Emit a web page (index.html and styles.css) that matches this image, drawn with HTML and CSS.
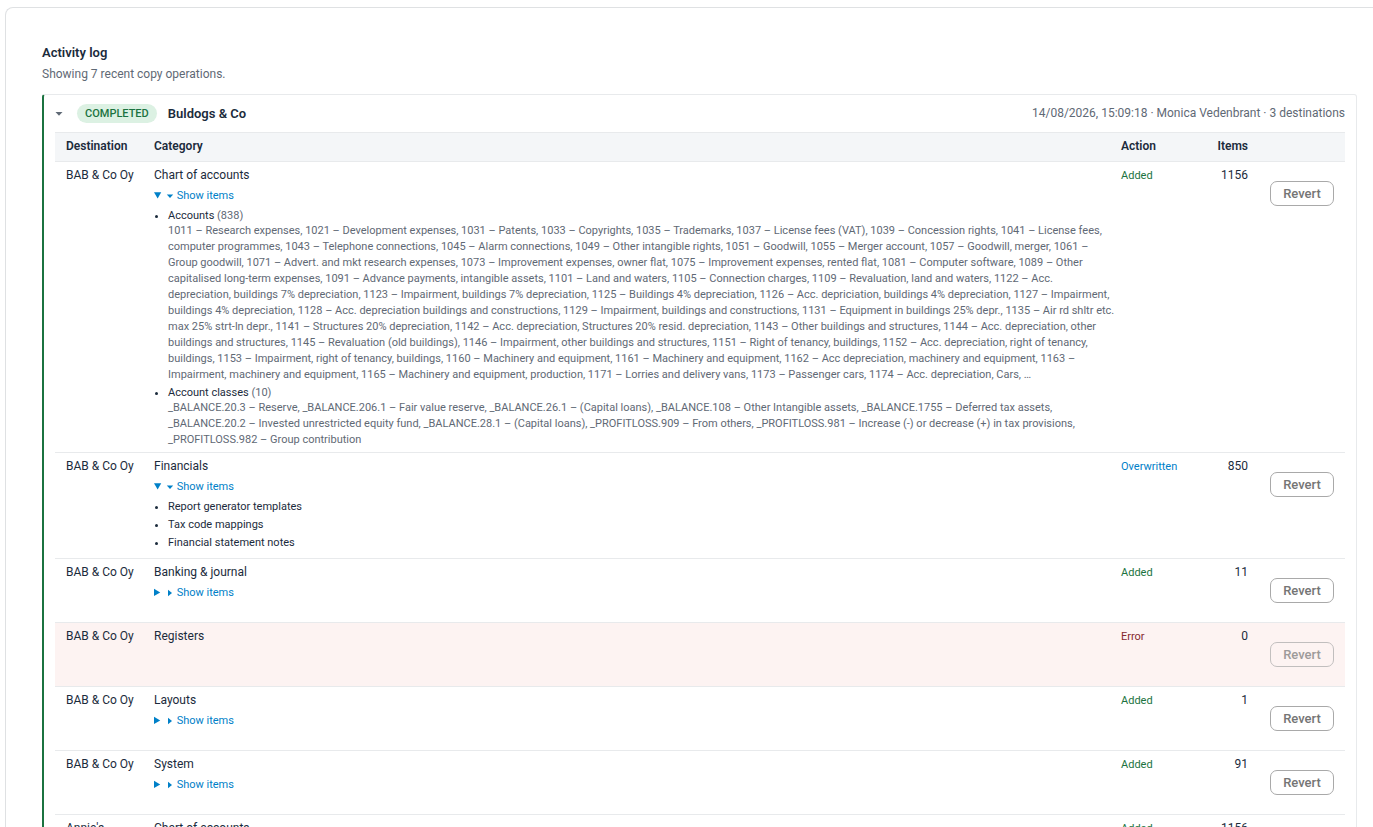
FILE: index.html
```
<!DOCTYPE html>
<html lang="en">
  <head>
    <meta charset="utf-8">
    <meta name="viewport" content="width=device-width, initial-scale=1.0">
    <title>Activity log</title>
    <link rel="stylesheet" href="styles.css">
  </head>
  <body>
    <main class="page">
      <h2 class="title">Activity log</h2>
      <p class="subtitle">Showing 7 recent copy operations.</p>

      <details class="job" open>
        <summary class="job-header">
          <svg class="job-caret" viewBox="0 0 8 8"><path d="M0.5 2h7L4 5.7z"/></svg>
          <span class="badge">COMPLETED</span>
          <strong class="job-name">Buldogs &amp; Co</strong>
          <span class="job-meta">14/08/2026, 15:09:18 · Monica Vedenbrant · 3 destinations</span>
        </summary>

        <table class="log">
          <thead>
            <tr>
              <th class="col-destination">Destination</th>
              <th>Category</th>
              <th class="col-action">Action</th>
              <th class="col-items">Items</th>
              <th class="col-revert"></th>
            </tr>
          </thead>
          <tbody>
            <tr>
              <td class="destination">BAB &amp; Co Oy</td>
              <td>
                Chart of accounts
                <details class="items" open>
                  <summary><svg class="caret" viewBox="0 0 8 8"><path d="M0.8 2.5h6.4L4 6z"/></svg>Show items</summary>
                  <ul>
                    <li>
                      Accounts <span class="count">(838)</span>
                      <div class="detail">
                        1011 – Research expenses, 1021 – Development expenses, 1031 – Patents, 1033 – Copyrights, 1035 – Trademarks, 1037 – License fees (VAT), 1039 – Concession rights, 1041 – License fees,<br>
                        computer programmes, 1043 – Telephone connections, 1045 – Alarm connections, 1049 – Other intangible rights, 1051 – Goodwill, 1055 – Merger account, 1057 – Goodwill, merger, 1061 –<br>
                        Group goodwill, 1071 – Advert. and mkt research expenses, 1073 – Improvement expenses, owner flat, 1075 – Improvement expenses, rented flat, 1081 – Computer software, 1089 – Other<br>
                        capitalised long-term expenses, 1091 – Advance payments, intangible assets, 1101 – Land and waters, 1105 – Connection charges, 1109 – Revaluation, land and waters, 1122 – Acc.<br>
                        depreciation, buildings 7% depreciation, 1123 – Impairment, buildings 7% depreciation, 1125 – Buildings 4% depreciation, 1126 – Acc. depriciation, buildings 4% depreciation, 1127 – Impairment,<br>
                        buildings 4% depreciation, 1128 – Acc. depreciation buildings and constructions, 1129 – Impairment, buildings and constructions, 1131 – Equipment in buildings 25% depr., 1135 – Air rd shltr etc.<br>
                        max 25% strt-ln depr., 1141 – Structures 20% depreciation, 1142 – Acc. depreciation, Structures 20% resid. depreciation, 1143 – Other buildings and structures, 1144 – Acc. depreciation, other<br>
                        buildings and structures, 1145 – Revaluation (old buildings), 1146 – Impairment, other buildings and structures, 1151 – Right of tenancy, buildings, 1152 – Acc. depreciation, right of tenancy,<br>
                        buildings, 1153 – Impairment, right of tenancy, buildings, 1160 – Machinery and equipment, 1161 – Machinery and equipment, 1162 – Acc depreciation, machinery and equipment, 1163 –<br>
                        Impairment, machinery and equipment, 1165 – Machinery and equipment, production, 1171 – Lorries and delivery vans, 1173 – Passenger cars, 1174 – Acc. depreciation, Cars, …
                      </div>
                    </li>
                    <li>
                      Account classes <span class="count">(10)</span>
                      <div class="detail">
                        _BALANCE.20.3 – Reserve, _BALANCE.206.1 – Fair value reserve, _BALANCE.26.1 – (Capital loans), _BALANCE.108 – Other Intangible assets, _BALANCE.1755 – Deferred tax assets,<br>
                        _BALANCE.20.2 – Invested unrestricted equity fund, _BALANCE.28.1 – (Capital loans), _PROFITLOSS.909 – From others, _PROFITLOSS.981 – Increase (-) or decrease (+) in tax provisions,<br>
                        _PROFITLOSS.982 – Group contribution
                      </div>
                    </li>
                  </ul>
                </details>
              </td>
              <td class="added">Added</td>
              <td class="number">1156</td>
              <td><button class="revert">Revert</button></td>
            </tr>
            <tr>
              <td class="destination">BAB &amp; Co Oy</td>
              <td>
                Financials
                <details class="items" open>
                  <summary><svg class="caret" viewBox="0 0 8 8"><path d="M0.8 2.5h6.4L4 6z"/></svg>Show items</summary>
                  <ul class="plain">
                    <li>Report generator templates</li>
                    <li>Tax code mappings</li>
                    <li>Financial statement notes</li>
                  </ul>
                </details>
              </td>
              <td class="overwritten">Overwritten</td>
              <td class="number">850</td>
              <td><button class="revert">Revert</button></td>
            </tr>
            <tr>
              <td class="destination">BAB &amp; Co Oy</td>
              <td>
                Banking &amp; journal
                <details class="items">
                  <summary><svg class="caret" viewBox="0 0 8 8"><path d="M2 0.8v6.4L6 4z"/></svg>Show items</summary>
                </details>
              </td>
              <td class="added">Added</td>
              <td class="number">11</td>
              <td><button class="revert">Revert</button></td>
            </tr>
            <tr class="failed">
              <td class="destination">BAB &amp; Co Oy</td>
              <td>Registers</td>
              <td class="error">Error</td>
              <td class="number">0</td>
              <td><button class="revert" disabled>Revert</button></td>
            </tr>
            <tr>
              <td class="destination">BAB &amp; Co Oy</td>
              <td>
                Layouts
                <details class="items">
                  <summary><svg class="caret" viewBox="0 0 8 8"><path d="M2 0.8v6.4L6 4z"/></svg>Show items</summary>
                </details>
              </td>
              <td class="added">Added</td>
              <td class="number">1</td>
              <td><button class="revert">Revert</button></td>
            </tr>
            <tr>
              <td class="destination">BAB &amp; Co Oy</td>
              <td>
                System
                <details class="items">
                  <summary><svg class="caret" viewBox="0 0 8 8"><path d="M2 0.8v6.4L6 4z"/></svg>Show items</summary>
                </details>
              </td>
              <td class="added">Added</td>
              <td class="number">91</td>
              <td><button class="revert">Revert</button></td>
            </tr>
            <tr>
              <td class="destination">Annie's</td>
              <td>
                Chart of accounts
                <details class="items">
                  <summary><svg class="caret" viewBox="0 0 8 8"><path d="M2 0.8v6.4L6 4z"/></svg>Show items</summary>
                </details>
              </td>
              <td class="added">Added</td>
              <td class="number">1156</td>
              <td><button class="revert">Revert</button></td>
            </tr>
          </tbody>
        </table>
      </details>
    </main>
  </body>
</html>
```
FILE: styles.css
```
* {
  box-sizing: border-box;
}
body {
  margin: 0;
  height: 100vh;
  overflow: hidden;
  background: #fff;
  color: #1b2b3c;
  font-family: Roboto, sans-serif;
  font-size: 12px;
  line-height: 17px;
}
.page {
  margin: 7px 0 0 5px;
  padding: 36px 16px 36px 36px;
  border: 1px solid #dfe1e3;
  border-right: none;
  border-radius: 8px 0 0 0;
}
.title {
  margin: 0;
  font-size: 13px;
  font-weight: 600;
  line-height: 18px;
}
.subtitle {
  margin: 4px 0 11px;
  color: #5f6975;
}
.job {
  padding: 0 11px 11px;
  border: 1px solid #e8eaec;
  border-left: 2px solid #1b7340;
  border-radius: 3px;
}
.job-header {
  display: flex;
  align-items: center;
  height: 37px;
  cursor: pointer;
}
.job-caret {
  width: 8px;
  height: 8px;
  margin-right: 14px;
  fill: #5f6975;
}
.badge {
  padding: 0 8px;
  border-radius: 10px;
  background: #dcf1e3;
  color: #1b7340;
  font-size: 11px;
  font-weight: 500;
  line-height: 19px;
}
.job-name {
  margin-left: 11px;
  font-size: 13px;
  font-weight: 600;
}
.job-meta {
  margin-left: auto;
  color: #5f6975;
}
.log {
  width: 100%;
  border-collapse: collapse;
  table-layout: fixed;
}
th {
  padding: 5px 11px 6px;
  border-top: 1px solid #e8eaec;
  border-bottom: 1px solid #e8eaec;
  background: #f4f6f8;
  font-weight: 600;
  text-align: left;
}
.col-destination {
  width: 88px;
}
.col-action {
  width: 77px;
}
.col-items {
  width: 72px;
  text-align: right;
}
.col-revert {
  width: 86px;
}
td {
  padding: 5px 11px 4px;
  border-bottom: 1px solid #e8eaec;
  vertical-align: top;
}
.destination {
  white-space: nowrap;
}
.number {
  text-align: right;
}
.added, .overwritten, .error {
  font-size: 11px;
}
.added {
  color: #1b7340;
}
.overwritten {
  color: #0080c8;
}
.error {
  color: #862a2f;
}
.failed {
  background: #fdf3f2;
}
.items {
  margin-top: 4px;
  font-size: 11px;
}
.items summary {
  color: #0080c8;
  line-height: 16px;
  cursor: pointer;
}
.caret {
  width: 8px;
  height: 8px;
  margin-right: 3px;
  fill: currentColor;
  vertical-align: -1px;
}
.items ul {
  margin: 4px 0 0;
  padding-left: 14px;
}
.items li {
  line-height: 15px;
}
.items li + li {
  margin-top: 2px;
}
.items .plain {
  padding-bottom: 3px;
}
.items .plain li {
  line-height: 16px;
}
.detail {
  line-height: 16px;
  white-space: nowrap;
}
.count, .detail {
  color: #5f6975;
}
.revert {
  display: block;
  width: 64px;
  height: 25px;
  margin: 14px 0 15px;
  padding: 0;
  border: 1px solid #a9a9a9;
  border-radius: 7px;
  background: #fff;
  color: #757575;
  font-family: inherit;
  font-size: 13px;
  font-weight: 500;
}
.revert:disabled {
  background: transparent;
  opacity: 0.7;
}
```
